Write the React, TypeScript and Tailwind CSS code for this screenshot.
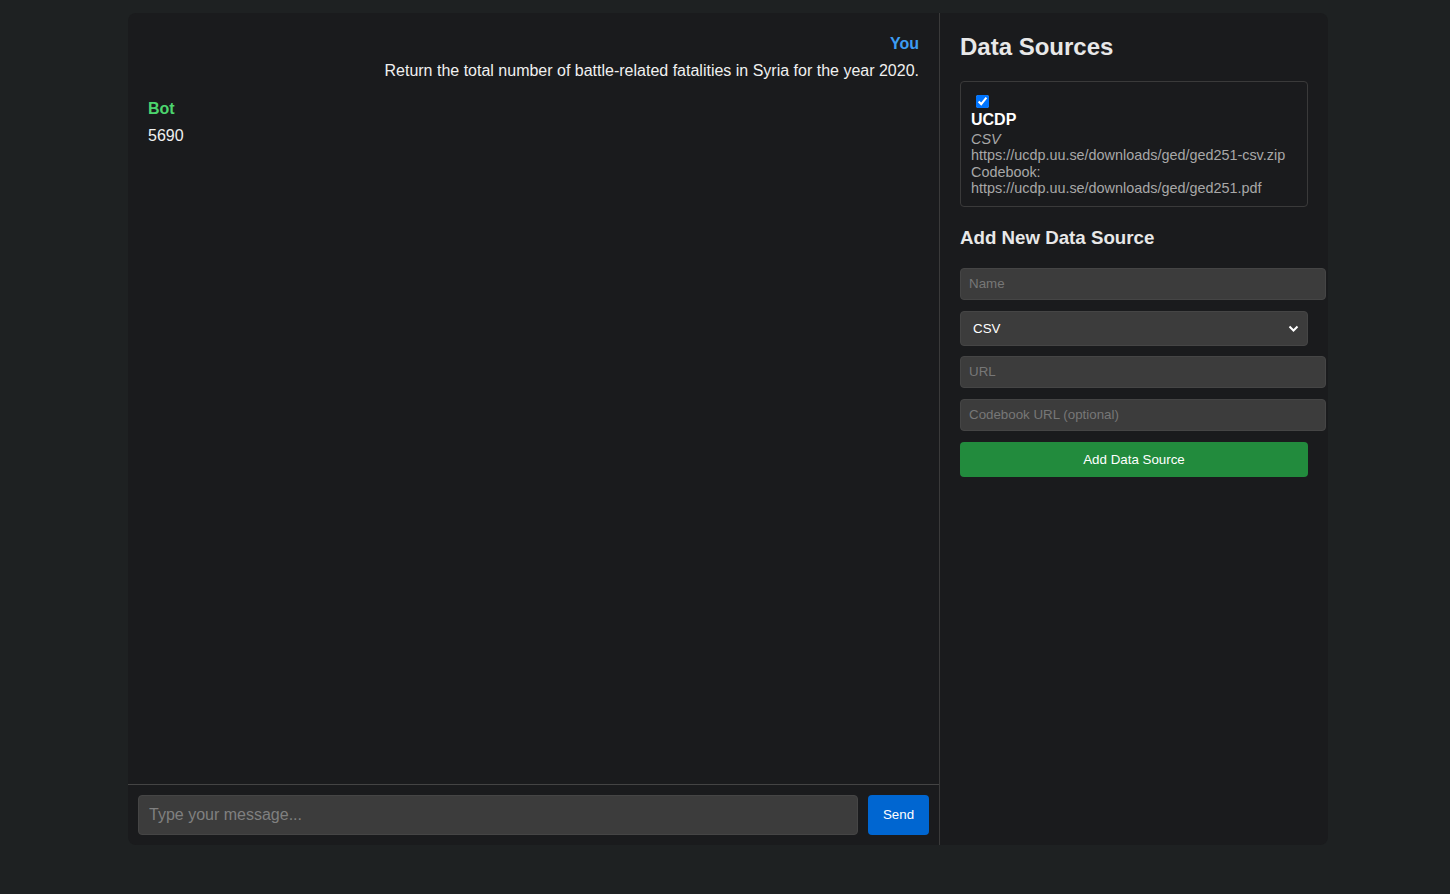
import { useState } from "react";

type Msg = { who: "You" | "Bot"; text: string };

const messages: Msg[] = [
  { who: "You", text: "Return the total number of battle-related fatalities in Syria for the year 2020." },
  { who: "Bot", text: "5690" },
];

const inputCls =
  "box-content block w-full px-2 py-[7px] h-4 text-[13.33px] leading-4 rounded border border-[#454545] bg-[#3c3c3c] text-white placeholder:text-[#777] outline-none";

export default function App() {
  const [checked, setChecked] = useState(true);

  return (
    <div className="min-h-[894px] bg-[#1e2122] pt-[13px] font-['Liberation_Sans',Arial,sans-serif]">
      <div className="ml-[128px] flex h-[832px] w-[1200px] overflow-hidden rounded-lg bg-[#1a1b1d]">
        {/* chat */}
        <div className="flex w-[812px] flex-col border-r border-[#3a3a3a]">
          <div className="flex-1 px-5 pt-[22px]">
            {messages.map((m, i) => (
              <div key={i} className={`mb-5 ${m.who === "You" ? "text-right" : "text-left"}`}>
                <div
                  className={`text-base font-bold leading-[18px] ${
                    m.who === "You" ? "text-[#3d9df3]" : "text-[#4cd56e]"
                  }`}
                >
                  {m.who}
                </div>
                <div className="mt-[9px] text-base leading-[18px] text-[#f0f0f0]">{m.text}</div>
              </div>
            ))}
          </div>
          <div className="flex gap-[10px] border-t border-[#444] p-[10px]">
            <input
              className="h-10 flex-1 rounded border border-[#454545] bg-[#3c3c3c] px-[10px] text-base text-white placeholder:text-[#808080] outline-none"
              placeholder="Type your message..."
            />
            <button className="h-10 w-[61px] rounded bg-[#0066d1] text-[13.33px] text-white">Send</button>
          </div>
        </div>

        {/* sidebar */}
        <div className="w-[388px] p-5 text-[#e8e8e8]">
          <h2 className="text-2xl font-bold leading-7">Data Sources</h2>
          <div className="mt-5 w-[348px] rounded border border-[#3a3a3a] p-[10px]">
            <input
              type="checkbox"
              checked={checked}
              onChange={() => setChecked(!checked)}
              className="m-[3px] ml-[5px] block h-[13px] w-[13px] accent-[#0075ff]"
            />
            <div className="text-base font-bold leading-[18px] text-white">UCDP</div>
            <div className="mt-[2px] text-[14.4px] leading-[16.25px] text-[#a8a8a8]">
              <div className="italic">CSV</div>
              <div>https://ucdp.uu.se/downloads/ged/ged251-csv.zip</div>
              <div>Codebook:</div>
              <div>https://ucdp.uu.se/downloads/ged/ged251.pdf</div>
            </div>
          </div>

          <h3 className="mt-[20px] text-[18.72px] font-bold leading-[22px]">Add New Data Source</h3>
          <div className="mt-[19px] w-[348px]">
            <input className={inputCls} placeholder="Name" />
            <div className="relative mt-[11px]">
              <select className="block h-[35px] w-[348px] appearance-none rounded border border-[#454545] bg-[#3c3c3c] px-3 text-[13.33px] text-white outline-none">
                <option>CSV</option>
              </select>
              <svg
                className="pointer-events-none absolute right-[9px] top-[13px]"
                width="11"
                height="9"
                viewBox="0 0 11 9"
              >
                <path d="M1.5 2.5 5.5 6.5 9.5 2.5" stroke="white" strokeWidth="2" fill="none" />
              </svg>
            </div>
            <div className="mt-[10px]">
              <input className={inputCls} placeholder="URL" />
            </div>
            <div className="mt-[11px]">
              <input className={inputCls} placeholder="Codebook URL (optional)" />
            </div>
            <button className="mt-[11px] h-[35px] w-[348px] rounded bg-[#228b3d] text-[13.33px] text-white">
              Add Data Source
            </button>
          </div>
        </div>
      </div>
    </div>
  );
}
